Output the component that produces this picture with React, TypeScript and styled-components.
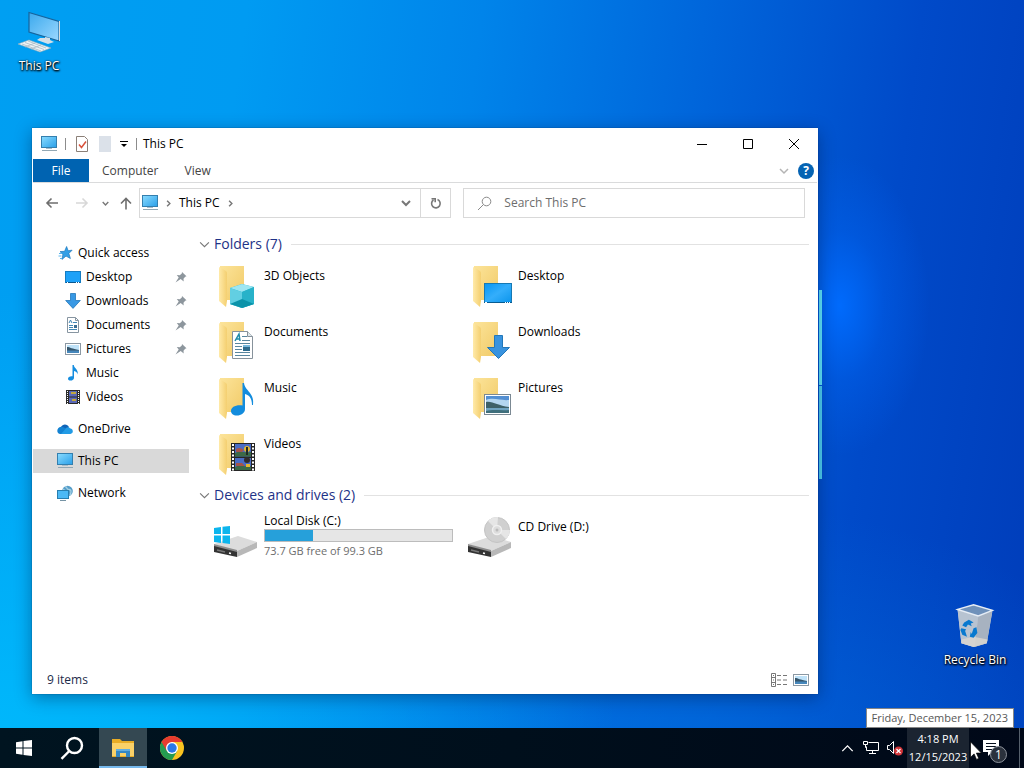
import React from "react";
import styled, { createGlobalStyle, css } from "styled-components";

const GlobalStyle = createGlobalStyle`
  *, *::before, *::after { box-sizing: border-box; }
  html, body { margin: 0; }
  body, button, input { font: 12px/16px "Open Sans", "Noto Sans", sans-serif; }
  button { margin: 0; padding: 0; border: 0; background: none; color: inherit; }
  svg { display: block; flex: none; }
`;

const Screen = styled.div`
  display: flex;
  flex-direction: column;
  height: 100vh;
  min-height: 640px;
  overflow: hidden;
`;

/* ---------- Desktop ---------- */

const Desktop = styled.main`
  position: relative;
  flex: 1;
  background:
    radial-gradient(ellipse 90px 150px at 82% 42%, rgba(0, 108, 255, 0.95), rgba(0, 104, 250, 0.35) 50%, rgba(0, 90, 230, 0) 100%),
    radial-gradient(ellipse 60% 60% at 0% 100%, rgba(0, 186, 252, 0.9), rgba(0, 178, 250, 0) 100%),
    radial-gradient(ellipse 45% 35% at 68% 104%, rgba(0, 112, 222, 0.6), rgba(0, 110, 220, 0) 100%),
    linear-gradient(98deg, #009ff2 0%, #009bf2 22%, #0084ea 43%, #0064da 64%, #004ac9 82%, #003dba 100%);
`;

const LightPane = styled.div`
  position: absolute;
  left: 80%;
  right: calc(20% - 3px);
  height: 95px;
  border-right: 3px solid #4fd2f4;
`;

const UpperPane = styled(LightPane)`
  top: 290px;
  border-color: #62eaff;
`;

const LowerPane = styled(LightPane)`
  top: 386px;
  height: 93px;
`;

const Shortcut = styled.button<{ $corner: "start" | "end" }>`
  position: absolute;
  display: flex;
  flex-direction: column;
  align-items: center;
  gap: 4px;
  width: 76px;
  color: #fff;
  text-shadow: 0 1px 2px #000, 1px 1px 2px #000, 0 0 2px rgba(0, 0, 0, 0.7);
  ${(p) => (p.$corner === "start" ? css`left: 1px; top: 6px;` : css`right: 11px; bottom: 60px;`)}
`;

/* ---------- Window ---------- */

const Window = styled.section`
  position: absolute;
  top: 128px;
  right: 206px;
  bottom: 34px;
  left: 32px;
  display: flex;
  flex-direction: column;
  padding: 0 1px;
  background: #fff;
  color: #000;
  box-shadow: 0 0 1px rgba(0, 40, 80, 0.7), 0 4px 16px rgba(0, 20, 60, 0.4);
`;

const TitleBar = styled.header`
  display: flex;
  align-items: center;
  height: 31px;
  padding-left: 8px;
`;

const QuickTools = styled.div`
  display: flex;
  align-items: center;
  gap: 8px;
`;

const Separator = styled.span`
  width: 1px;
  height: 12px;
  background: #8c8c8c;
`;

const WindowTitle = styled.h1`
  flex: 1;
  margin: 0;
  padding-left: 6px;
  font-size: 12px;
  font-weight: 400;
`;

const CaptionButton = styled.button`
  display: grid;
  place-items: center;
  width: 46px;
  height: 30px;
`;

const Ribbon = styled.div`
  display: flex;
  align-items: center;
  height: 24px;
  border-bottom: 1px solid #dadbdc;
`;

const RibbonTab = styled.button<{ $active?: boolean }>`
  height: 23px;
  padding: 0 13px;
  color: #444;
  ${(p) => p.$active && css`width: 56px; background: #0063b1; color: #fff;`}
`;

const RibbonEnd = styled.div`
  display: flex;
  align-items: center;
  gap: 9px;
  margin-left: auto;
  padding-right: 3px;
`;

const HelpButton = styled.button`
  width: 16px;
  height: 16px;
  border-radius: 50%;
  background: #0563b3;
  color: #fff;
  font-weight: 700;
`;

const AddressRow = styled.div`
  display: flex;
  align-items: center;
  height: 40px;
  padding: 0 12px 0 4px;
`;

const HistoryButton = styled.button<{ $width: number }>`
  display: grid;
  place-items: center;
  width: ${(p) => p.$width}px;
  height: 28px;
`;

const AddressBox = styled.div`
  display: flex;
  flex: 19 1 0;
  align-items: stretch;
  height: 30px;
  margin-right: 12px;
  border: 1px solid #d9d9d9;
`;

const Crumbs = styled.div`
  display: flex;
  flex: 1;
  align-items: center;
  gap: 7px;
  padding-left: 2px;
`;

const BoxButton = styled.button<{ $ruled?: boolean }>`
  display: grid;
  place-items: center;
  width: 30px;
  border-left: 1px solid ${(p) => (p.$ruled ? "#d9d9d9" : "transparent")};
`;

const SearchBox = styled.label`
  display: flex;
  flex: 20 1 0;
  align-items: center;
  gap: 12px;
  height: 30px;
  padding-left: 13px;
  border: 1px solid #d9d9d9;
`;

const SearchInput = styled.input`
  flex: 1;
  min-width: 0;
  padding: 0;
  border: 0;
  outline: 0;
  background: none;
  &::placeholder { color: #6d6d6d; opacity: 1; }
`;

const Body = styled.div`
  display: flex;
  flex: 1;
  min-height: 0;
`;

const NavPane = styled.nav`
  display: flex;
  flex-direction: column;
  gap: 8px;
  width: 156px;
  padding-top: 18px;
`;

const NavItem = styled.button<{ $nested?: boolean; $selected?: boolean }>`
  display: flex;
  align-items: center;
  gap: 5px;
  width: 100%;
  height: 24px;
  padding-left: ${(p) => (p.$nested ? 32 : 24)}px;
  background: ${(p) => (p.$selected ? "#d9d9d9" : "transparent")};
`;

const NavLabel = styled.span`
  flex: 1;
  text-align: left;
`;

const Content = styled.div`
  flex: 1;
  padding: 11px 8px 0 10px;
  overflow: hidden;
`;

const GroupHeader = styled.h2`
  display: flex;
  align-items: center;
  gap: 4px;
  height: 20px;
  margin: 0 0 6px;
  color: #1e3287;
  font-size: 14px;
  font-weight: 400;
  line-height: 20px;
  &::after {
    content: "";
    flex: 1;
    height: 1px;
    margin-left: 5px;
    background: #e2e2e2;
  }
`;

const Tiles = styled.div`
  display: grid;
  grid-template-columns: repeat(auto-fill, 254px);
  grid-auto-rows: 56px;
  padding-left: 13px;
  margin-bottom: 1px;
`;

const Tile = styled.button`
  display: flex;
  align-items: flex-start;
  gap: 4px;
  padding-top: 2px;
  text-align: left;
`;

const TileText = styled.span<{ $drive?: boolean }>`
  display: flex;
  flex-direction: column;
  width: 189px;
  padding-top: ${(p) => (p.$drive ? 0 : 6)}px;
`;

const Capacity = styled.span`
  height: 13px;
  border: 1px solid #bcbcbc;
  background: #e6e6e6;
`;

const CapacityUsed = styled.span`
  display: block;
  height: 100%;
  background: #26a0da;
`;

const Muted = styled.span`
  margin-top: 1px;
  color: #6d6d6d;
  font-size: 11px;
`;

const StatusBar = styled.footer`
  display: flex;
  align-items: center;
  justify-content: space-between;
  height: 26px;
  padding: 0 8px 2px 14px;
  color: #1c2b4a;
`;

const ViewButtons = styled.div`
  display: flex;
  gap: 6px;
`;

/* ---------- Taskbar ---------- */

const Taskbar = styled.footer`
  position: relative;
  display: flex;
  justify-content: space-between;
  height: 40px;
  background: linear-gradient(90deg, #001420, #000f1c 50%, #000818);
  color: #fff;
`;

const TaskGroup = styled.div`
  display: flex;
`;

const TaskButton = styled.button<{ $active?: boolean }>`
  display: grid;
  place-items: center;
  width: 48px;
  ${(p) => p.$active && css`background: #344852; box-shadow: inset 0 -2px #76b9ed;`}
`;

const AppGroup = styled(TaskGroup)`
  gap: 1px;
  padding-left: 3px;
`;

const TrayButton = styled.button`
  display: grid;
  place-items: center;
  width: 24px;
`;

const Clock = styled.button`
  display: flex;
  flex-direction: column;
  align-items: center;
  justify-content: center;
  gap: 2px;
  width: 62px;
  background: #1b2431;
  font-size: 11px;
`;

const ActionCenter = styled.button`
  position: relative;
  display: grid;
  place-items: center;
  width: 50px;
  padding-right: 6px;
`;

const Badge = styled.span`
  position: absolute;
  left: 21px;
  top: 18px;
  width: 17px;
  height: 17px;
  border: 1px solid #8d939c;
  border-radius: 50%;
  background: #2a313c;
  line-height: 15px;
  text-align: center;
`;

const ShowDesktop = styled.button`
  width: 5px;
  border-left: 1px solid #56606c;
`;

const Tooltip = styled.div`
  position: absolute;
  right: 10px;
  bottom: 40px;
  height: 20px;
  padding: 1px 5px;
  border: 1px solid #868686;
  background: #fff;
  color: #575757;
  font-size: 11px;
  white-space: nowrap;
`;

const Pointer = styled.svg`
  position: absolute;
  right: 42px;
  top: 13px;
`;

/* ---------- Icons ---------- */

const MonitorIcon = () => (
  <svg width="16" height="16" viewBox="0 0 16 16">
    <defs>
      <linearGradient id="monitor" x2="1" y2="1">
        <stop stopColor="#8bdcff" /><stop offset="1" stopColor="#2a9fe8" />
      </linearGradient>
    </defs>
    <rect x=".5" y=".5" width="15" height="11" fill="url(#monitor)" stroke="#347fae" />
    <path d="M5 12.500h6" stroke="#a7bcc9" />
    <path d="M1 14.500h15" stroke="#93a8b4" />
  </svg>
);

const StarIcon = () => (
  <svg width="16" height="16" viewBox="0 0 16 16">
    <path d="M9.600 1.500l1.500 4.200 4-.5-3.200 3.200 1.500 5.100-4.400-2.400-4 3.300.9-5L3 6.600l4.600-.3z" fill="#319fe6" stroke="#1d78bd" strokeWidth=".7" />
    <path d="M2 8.500h3M1.500 11h3M3 13.500h2" stroke="#58b4ec" />
  </svg>
);

const DesktopIcon = () => (
  <svg width="16" height="16" viewBox="0 0 16 16">
    <rect x=".5" y="2.500" width="15" height="11" fill="#1da1f8" stroke="#147cc2" />
    <path d="M1 13.500h14" stroke="#0b568d" />
    <path d="M2 13.500h1M11 13.500h1M13 13.500h1" stroke="#fff" />
  </svg>
);

const DownloadIcon = () => (
  <svg width="16" height="16" viewBox="0 0 16 16">
    <path d="M5.500.5h5v7h4.800L8 15.400.7 7.500h4.800z" fill="#3898e4" stroke="#2277ba" strokeWidth=".8" />
  </svg>
);

const DocumentIcon = () => (
  <svg width="16" height="16" viewBox="0 0 16 16">
    <path d="M2.500.5h8l3 3v12h-11z" fill="#fff" stroke="#8795a1" />
    <path d="M10.500.5v3h3" fill="none" stroke="#8795a1" />
    <path d="M4 6l1.500-3L7 6M8 5.500h4M4 8.500h4M4 10.500h4M4 12.500h8" fill="none" stroke="#3f86b5" />
    <path d="M9 8h3v3H9z" fill="#3c6e93" />
  </svg>
);

const PictureIcon = () => (
  <svg width="16" height="16" viewBox="0 0 16 16">
    <rect x=".5" y="2.500" width="15" height="11" fill="#fff" stroke="#8b98a3" />
    <path d="M2 4h12v8H2z" fill="#bfe2f8" />
    <path d="M2 6c3 0 5 2 12 3v1H2z" fill="#35556b" />
    <path d="M2 9.500h12V12H2z" fill="#4687bb" />
  </svg>
);

const MusicIcon = () => (
  <svg width="16" height="16" viewBox="0 0 16 16">
    <path d="M7.500 0h1.300c.3 3.500 4.700 4 3.900 9.500-.4-2-1.500-3-3.700-3.500v6.700c0 1.700-1.600 2.900-3.500 2.900C3.800 15.600 3 14.700 3 13.700c0-1.600 2-2.800 4.500-2.400z" fill="#148de0" />
  </svg>
);

const VideoIcon = () => (
  <svg width="16" height="16" viewBox="0 0 16 16">
    <path d="M1 1h14v14H1z" fill="#2b2b2b" />
    <path d="M4 2h8v5.500H4zM4 8.500h8V14H4z" fill="#5a69b8" />
    <path d="M6 3h5v2H6zM7 10h4v2H7z" fill="#c0a740" />
    <path d="M2.500 2v13M13.500 2v13" stroke="#fff" strokeDasharray="1 1" />
  </svg>
);

const CloudIcon = () => (
  <svg width="16" height="16" viewBox="0 0 16 16">
    <path d="M4 6c1.500-3.500 6.500-3.500 8 .2L9 9z" fill="#0f64b8" />
    <path d="M4 5.700c2 0 3.500.8 8.300 4.300L6 13H3.300C-.8 12.500-.8 6.700 4 5.700z" fill="#1382d2" />
    <path d="M8 8.500C9 5.800 12 5.500 13 7.300c3.600.5 3.800 5.200.3 5.700H4z" fill="#229be5" />
  </svg>
);

const NetworkIcon = () => (
  <svg width="16" height="16" viewBox="0 0 16 16">
    <circle cx="10.500" cy="6" r="5.300" fill="#559dc9" />
    <path d="M8 1.500c3 .5 1 3 4 3s2 3 1 6M6 4c2 1 2 2 1 3" stroke="#a4d1e4" fill="none" strokeWidth="1.300" />
    <rect x=".5" y="5.500" width="11" height="8" fill="#4cb9f5" stroke="#287eaf" />
    <path d="M3 15.500h6" stroke="#7694a5" />
  </svg>
);

const PinIcon = () => (
  <svg width="16" height="16" viewBox="0 0 16 16">
    <path d="M9 3l4.500 4.300-1.300.4-1.700 2 .2 2.800-3-2.500L2.500 13.500l3.200-5L3.800 6l3 .2 2-1.700z" fill="#8d969d" />
  </svg>
);

const Chevron = ({ dir = "down", color = "#777", size = 10, weight = 1 }: { dir?: "down" | "right" | "up"; color?: string; size?: number; weight?: number }) => (
  <svg width={size} height={size} viewBox="0 0 10 10" fill="none" stroke={color} strokeWidth={weight}>
    <path d={dir === "down" ? "M1 3l4 4 4-4" : dir === "up" ? "M1 7l4-4 4 4" : "M3 1l4 4-4 4"} />
  </svg>
);

const Arrow = ({ d, color }: { d: string; color: string }) => (
  <svg width="14" height="14" viewBox="0 0 14 14" fill="none" stroke={color} strokeWidth="1.600"><path d={d} /></svg>
);

const overlays: Record<string, React.ReactNode> = {
  "3D Objects": (
    <>
      <path d="M18 26l12-4 12 3v17l-12 4-12-4z" fill="#25b5cb" />
      <path d="M18 26l12-4 12 3-12 5z" fill="#9ee6f2" />
      <path d="M18 26l12 4v16l-12-4z" fill="#62cfe2" />
      <path d="M30 30l12-5v17l-12 4z" fill="#28b2c9" />
      <path d="M18 42l12-5 12 5-12 4z" fill="#0c93a9" />
    </>
  ),
  Desktop: (
    <>
      <rect x="18.500" y="21.500" width="27" height="19" fill="url(#screenFill)" stroke="#1679b4" />
      <path d="M18 40.500h28" stroke="#075b91" />
      <path d="M19 40.500h2M39 40.500h1M41 40.500h1M43 40.500h1" stroke="#fff" />
    </>
  ),
  Documents: (
    <g transform="translate(0 -6)">
      <path d="M20.500 19.500h15l5 5v22h-20z" fill="#fff" stroke="#87929b" />
      <path d="M35.500 19.500v5h5" fill="#dfe7ec" stroke="#87929b" />
      <path d="M23 29l4-7 1 7M24 27h4" stroke="#1e8baa" fill="none" strokeWidth="1.500" />
      <path d="M30 24.500h5M30 28.500h8M23 31.500h15M23 34.500h7M23 37.500h7M23 40.500h15M23 43.500h15" stroke="#58869f" />
      <path d="M31 33h7v6h-7z" fill="#2e6b8d" /><path d="M31 33h7v2h-7z" fill="#77b8dc" />
    </g>
  ),
  Downloads: <path d="M28.500 17.500h8v12h7l-11 11-11-11h7z" fill="#3893df" stroke="#2277b9" />,
  Music: <path d="M30.500 9H32c1 8 11 10 9 22h-1c0-7-3-10-7-11v15c0 4-4 6.500-8 6.500-4 0-6-2-6-4.500 0-4 5-6.500 11.500-5.500z" fill="#138cdd" />,
  Pictures: (
    <>
      <rect x="18.500" y="20.500" width="26" height="20" fill="#fff" stroke="#7b8993" />
      <path d="M20 22h23v17H20z" fill="#b4d6f0" />
      <path d="M20 22h23v4c-8 1-15-3-23 0z" fill="#538fd2" />
      <path d="M20 28c7-1 12 4 23 5v2H20z" fill="#3e6168" />
      <path d="M20 34h23v5H20z" fill="#6fa3c0" /><path d="M20 37c8-2 15 0 23-1v3H20z" fill="#3f6f7c" />
    </>
  ),
  Videos: (
    <g transform="translate(0 -6)">
      <path d="M19 19h24v28H19z" fill="#252525" />
      <path d="M23 20h16v12.500H23zM23 34h16v12H23z" fill="#4a6cc4" />
      <path d="M23 29c5-3 8 0 16-1v4.500H23zM23 43c5-3 8 0 16-1v4H23z" fill="#3c6947" />
      <path d="M24 25c3-2 5-1 8 1l-2 2h-6zM24 39h6l3 3h-9z" fill="#a5544b" />
      <circle cx="35" cy="25" r="3" fill="#e4b62e" /><path d="M34 23h2v8h-2z" fill="#1f2926" />
      <circle cx="35" cy="36" r="3" fill="#302c2e" /><path d="M34 40h4v3h-4z" fill="#e4b62e" />
      <path d="M21 20v27M41 20v27" stroke="#fff" strokeWidth="2" strokeDasharray="2 1.500" />
    </g>
  ),
};

const FolderIcon = ({ name }: { name: string }) => (
  <svg width="48" height="48" viewBox="0 0 48 48">
    <defs>
      <linearGradient id="folderBack" x2="1" y2="1"><stop stopColor="#fce49a" /><stop offset="1" stopColor="#f1ca67" /></linearGradient>
      <linearGradient id="folderFlap" x2="1" y2="0"><stop stopColor="#ffeaa9" /><stop offset="1" stopColor="#f4cf70" /></linearGradient>
      <linearGradient id="screenFill" x2="1" y2="1"><stop stopColor="#0796f3" /><stop offset=".5" stopColor="#34aefb" /><stop offset="1" stopColor="#0b95ec" /></linearGradient>
    </defs>
    <path d="M8 4h24v34H8z" fill="url(#folderBack)" />
    <path d="M7 5l7 4c1 1 1 2 1 3v27l-1 6-7-6z" fill="url(#folderFlap)" />
    {overlays[name]}
  </svg>
);

const DriveBody = () => (
  <>
    <path d="M2 31l24-8 19 6-20 9z" fill="#dcdcdc" />
    <path d="M25 38l20-9v6l-20 9z" fill="#b8b8b8" />
    <path d="M2 32l23 6v6L2 39z" fill="#333" />
    <path d="M2 31l23 6v2L2 33z" fill="#8c8c8c" />
    <path d="M5 37l8 2" stroke="#777" strokeWidth="1.500" />
    <path d="M17 40l2 .5" stroke="#fff" strokeWidth="1.500" />
  </>
);

const LocalDiskIcon = () => (
  <svg width="48" height="48" viewBox="0 0 48 48">
    <DriveBody />
    <path d="M2 15l7-1v7H2zM10.500 13.800L18 13v8h-7.500zM2 22.500h7V30l-7-1zM10.500 22.500H18V31l-7.500-1z" fill="#0cb5ed" />
  </svg>
);

const CdDriveIcon = () => (
  <svg width="48" height="48" viewBox="0 0 48 48">
    <DriveBody />
    <circle cx="31" cy="17" r="12.500" fill="#d0d0d0" stroke="#c4c4c4" />
    <path d="M31 17L22 8a13 13 0 0 1 10-4zM31 17l9 9a13 13 0 0 0 4-9z" fill="#e6e6e6" />
    <circle cx="31" cy="17" r="4.500" fill="#ddd" stroke="#f0f0f0" strokeWidth="1.500" />
    <circle cx="31" cy="17" r="1.500" fill="#bbb" />
  </svg>
);

const DesktopPcIcon = () => (
  <svg width="48" height="48" viewBox="0 0 48 48">
    <defs><linearGradient id="bigScreen" x2="1" y2="1"><stop stopColor="#3ba9ed" /><stop offset="1" stopColor="#9bd8ff" /></linearGradient></defs>
    <path d="M14 6.500l30 9V35l-30-9z" fill="url(#bigScreen)" stroke="#17649c" strokeWidth="1.200" />
    <path d="M44.500 15v20" stroke="#d9dddd" />
    <path d="M30 31l5 1v2l4 2-6 2-11-4 3-2h5z" fill="#d5e0e8" />
    <path d="M3 38l11-4 22 8-11 4z" fill="#eef3f5" stroke="#8fabbb" strokeWidth=".6" />
    <path d="M7 38l19 7M10 36.500l19 7M13 35l18 7M10 41l10-4M16 43l10-4" stroke="#a9bac4" strokeWidth=".8" />
  </svg>
);

const RecycleBinIcon = () => (
  <svg width="48" height="48" viewBox="-2 -4 51 51">
    <path d="M5 6l4 36 13 4 14-4 6-34-15 6z" fill="#c5cdd6" />
    <path d="M5 6l22 7-4 33-14-4z" fill="#b7c3d1" />
    <path d="M27 13l15-6-6 35-13 4z" fill="#a7b2c0" />
    <path d="M5 6l17-5 20 6-15 6z" fill="#6f91ba" stroke="#e6edf5" strokeWidth="1.500" />
    <path d="M9 38l13-3 15 3-1 4-14 4-13-4z" fill="#dcd7d0" opacity=".8" />
    <g fill="#0879cf">
      <path d="M12 20l5-3 5 3-3 1 1 3-4-2-2 3-4-2z" />
      <path d="M9 26l5 1-1 2 2 6-5-2-2-5z" />
      <path d="M22 26l3-1 1 6-4 5-4-1 1-5 1 2z" />
    </g>
  </svg>
);

const ChromeIcon = () => (
  <svg width="24" height="24" viewBox="0 0 24 24">
    <circle cx="12" cy="12" r="12" fill="#f9c320" />
    <path d="M12 12L1.600 6A12 12 0 0 0 12 24l5.200-9z" fill="#249b50" />
    <path d="M12 6h10.400A12 12 0 0 0 1.600 6l5.200 9L12 12z" fill="#e63b2f" />
    <circle cx="12" cy="12" r="6" fill="#fff" />
    <circle cx="12" cy="12" r="4.700" fill="#2a78e7" />
  </svg>
);

function CaptionIcon({ kind }: { kind: "properties" | "folder" | "menu" }) {
  if (kind === "menu") {
    return <svg width="8" height="8" viewBox="0 0 8 8"><path d="M0 1.500h8" stroke="#000" /><path d="M1 4h6L4 7z" /></svg>;
  }
  if (kind === "folder") {
    return <svg width="15" height="16" viewBox="0 0 15 16"><path d="M2 0h12v16H2z" fill="#dbe1e9" /></svg>;
  }
  return (
    <svg width="15" height="16" viewBox="0 0 15 16">
      <path d="M2.500.500h8l3 3v12h-11z" fill="#fff" stroke="#8b8078" />
      <path d="M5 8.500l2.500 3L12 5.500" fill="none" stroke="#d9533c" strokeWidth="1.500" />
    </svg>
  );
}

/* ---------- Data ---------- */

const quickAccess = [
  { label: "Desktop", icon: <DesktopIcon />, pinned: true },
  { label: "Downloads", icon: <DownloadIcon />, pinned: true },
  { label: "Documents", icon: <DocumentIcon />, pinned: true },
  { label: "Pictures", icon: <PictureIcon />, pinned: true },
  { label: "Music", icon: <MusicIcon />, pinned: false },
  { label: "Videos", icon: <VideoIcon />, pinned: false },
];

const places = [
  { label: "OneDrive", icon: <CloudIcon /> },
  { label: "This PC", icon: <MonitorIcon />, selected: true },
  { label: "Network", icon: <NetworkIcon /> },
];

const folders = ["3D Objects", "Desktop", "Documents", "Downloads", "Music", "Pictures", "Videos"];

const disk = { free: 73.7, total: 99.3 };

export default function App() {
  return (
    <Screen>
      <GlobalStyle />
      <Desktop>
        <UpperPane />
        <LowerPane />
        <Shortcut $corner="start"><DesktopPcIcon />This PC</Shortcut>
        <Shortcut $corner="end"><RecycleBinIcon />Recycle Bin</Shortcut>

        <Window aria-label="This PC">
          <TitleBar>
            <QuickTools>
              <MonitorIcon />
              <Separator />
              <CaptionIcon kind="properties" />
              <CaptionIcon kind="folder" />
              <CaptionIcon kind="menu" />
              <Separator />
            </QuickTools>
            <WindowTitle>This PC</WindowTitle>
            <CaptionButton aria-label="Minimize"><svg width="10" height="10" stroke="#000"><path d="M0 5.500h10" /></svg></CaptionButton>
            <CaptionButton aria-label="Maximize"><svg width="10" height="10" stroke="#000" fill="none"><path d="M.5.500h9v9h-9z" /></svg></CaptionButton>
            <CaptionButton aria-label="Close"><svg width="10" height="10" stroke="#000"><path d="M0 0l10 10M10 0L0 10" /></svg></CaptionButton>
          </TitleBar>

          <Ribbon>
            <RibbonTab $active>File</RibbonTab>
            <RibbonTab>Computer</RibbonTab>
            <RibbonTab>View</RibbonTab>
            <RibbonEnd>
              <button aria-label="Expand the ribbon"><Chevron color="#b4b4b4" weight={1.5} /></button>
              <HelpButton aria-label="Help">?</HelpButton>
            </RibbonEnd>
          </Ribbon>

          <AddressRow>
            <HistoryButton $width={30} aria-label="Back"><Arrow color="#6e6e6e" d="M13 7H2M6.500 2.500L2 7l4.500 4.500" /></HistoryButton>
            <HistoryButton $width={30} aria-label="Forward"><Arrow color="#d8d8d8" d="M1 7h11M7.500 2.500L12 7l-4.500 4.500" /></HistoryButton>
            <HistoryButton $width={16} aria-label="Recent locations"><Chevron size={7} weight={2} /></HistoryButton>
            <HistoryButton $width={26} aria-label="Up"><Arrow color="#6e6e6e" d="M7 13.500V2.500M2 7.500l5-5 5 5" /></HistoryButton>
            <AddressBox>
              <Crumbs>
                <MonitorIcon />
                <Chevron dir="right" color="#777" size={7} weight={2} />
                <button>This PC</button>
                <Chevron dir="right" color="#777" size={7} weight={2} />
              </Crumbs>
              <BoxButton aria-label="Previous locations"><Chevron color="#777" weight={2} /></BoxButton>
              <BoxButton $ruled aria-label="Refresh">
                <svg width="12" height="12" viewBox="0 0 12 12" fill="none" stroke="#777" strokeWidth="1.600"><path d="M7.500 2.600A4.300 4.300 0 1 1 3.500 3M1.500 1.800h3.700v3.500" /></svg>
              </BoxButton>
            </AddressBox>
            <SearchBox>
              <svg width="15" height="15" viewBox="0 0 15 15" fill="none" stroke="#8a8a8a"><circle cx="9.500" cy="5.500" r="4.300" /><path d="M6.500 8.500L1 14" /></svg>
              <SearchInput type="text" placeholder="Search This PC" aria-label="Search This PC" />
            </SearchBox>
          </AddressRow>

          <Body>
            <NavPane>
              <div>
                <NavItem><StarIcon /><NavLabel>Quick access</NavLabel></NavItem>
                {quickAccess.map((item) => (
                  <NavItem key={item.label} $nested>
                    {item.icon}
                    <NavLabel>{item.label}</NavLabel>
                    {item.pinned && <PinIcon />}
                  </NavItem>
                ))}
              </div>
              {places.map((item) => (
                <NavItem key={item.label} $selected={item.selected}>{item.icon}<NavLabel>{item.label}</NavLabel></NavItem>
              ))}
            </NavPane>

            <Content>
              <GroupHeader><Chevron size={11} />Folders (7)</GroupHeader>
              <Tiles>
                {folders.map((name) => (
                  <Tile key={name}><FolderIcon name={name} /><TileText>{name}</TileText></Tile>
                ))}
              </Tiles>
              <GroupHeader><Chevron size={11} />Devices and drives (2)</GroupHeader>
              <Tiles>
                <Tile>
                  <LocalDiskIcon />
                  <TileText $drive>
                    Local Disk (C:)
                    <Capacity><CapacityUsed style={{ width: `${100 * (1 - disk.free / disk.total)}%` }} /></Capacity>
                    <Muted>{disk.free} GB free of {disk.total} GB</Muted>
                  </TileText>
                </Tile>
                <Tile><CdDriveIcon /><TileText>CD Drive (D:)</TileText></Tile>
              </Tiles>
            </Content>
          </Body>

          <StatusBar>
            9 items
            <ViewButtons>
              <button aria-label="Details view">
                <svg width="16" height="14" viewBox="0 0 16 14" fill="none" stroke="#777"><path d="M.5.500h4v13h-4zM0 4.500h5M0 9.500h5M2 2.500h1M2 7h1M2 11.500h1" /><path d="M6 2.500h4M12 2.500h4M6 7h4M12 7h4M6 11.500h4M12 11.500h4" /></svg>
              </button>
              <button aria-label="Large icons view"><PictureIcon /></button>
            </ViewButtons>
          </StatusBar>
        </Window>
      </Desktop>

      <Taskbar>
        <TaskGroup>
          <TaskButton aria-label="Start">
            <svg width="16" height="16" viewBox="0 0 16 16" fill="#fff"><path d="M0 2.200l6.500-.9v6.200H0zM7.500 1.100L16 0v7.500H7.500zM0 8.500h6.500v6.200L0 13.800zM7.500 8.500H16V16l-8.500-1.100z" /></svg>
          </TaskButton>
          <TaskButton aria-label="Search">
            <svg width="24" height="24" viewBox="0 0 24 24" fill="none" stroke="#fff" strokeWidth="2.400"><circle cx="14.500" cy="9.500" r="7.500" /><path d="M9.300 15L1.500 22.800" /></svg>
          </TaskButton>
          <AppGroup>
            <TaskButton $active aria-label="File Explorer">
              <svg width="22" height="20" viewBox="0 0 22 20"><path d="M0 1h8l2 2h12v16H0z" fill="#e8ac26" /><path d="M0 5h22v13H0z" fill="#fad168" /><path d="M4 11h14v8h-4v-4H8v4H4z" fill="#3487c4" /><path d="M4 11h14v2H4z" fill="#62ade0" /></svg>
            </TaskButton>
            <TaskButton aria-label="Google Chrome"><ChromeIcon /></TaskButton>
          </AppGroup>
        </TaskGroup>
        <TaskGroup>
          <TrayButton aria-label="Show hidden icons"><Chevron dir="up" color="#fff" size={13} /></TrayButton>
          <TrayButton aria-label="Network">
            <svg width="16" height="14" viewBox="0 0 16 14" fill="none" stroke="#fff"><path d="M5.500 1.500h10v8h-12v-4M9.500 9.500v3M6 12.500h7" /><path d="M.5.500h4v3h-4zM2.500 3.500v3h1" /></svg>
          </TrayButton>
          <TrayButton aria-label="Volume muted">
            <svg width="16" height="16" viewBox="0 0 16 16"><path d="M.5 5.500h2l4-4v12l-4-4h-2z" fill="none" stroke="#fff" /><circle cx="11.500" cy="11" r="4.500" fill="#d13438" /><path d="M9.500 9l4 4M13.500 9l-4 4" stroke="#fff" strokeWidth="1.200" /></svg>
          </TrayButton>
          <Clock><span>4:18 PM</span><span>12/15/2023</span></Clock>
          <ActionCenter aria-label="Notifications">
            <svg width="16" height="16" viewBox="0 0 16 16"><path d="M0 0h16v12H9l-4 4v-4H0z" fill="#fff" /><path d="M3 3.500h10M3 6.500h10M3 9.500h6" stroke="#07101e" /></svg>
            <Badge>1</Badge>
          </ActionCenter>
          <ShowDesktop aria-label="Show desktop" />
        </TaskGroup>
        <Tooltip role="tooltip">Friday, December 15, 2023</Tooltip>
        <Pointer width="12" height="19" viewBox="0 0 12 19"><path d="M.5.800v15.500l3.600-3.400 2.400 5.500 2.300-1-2.400-5.300h5z" fill="#fff" stroke="#000" strokeWidth=".7" /></Pointer>
      </Taskbar>
    </Screen>
  );
}
